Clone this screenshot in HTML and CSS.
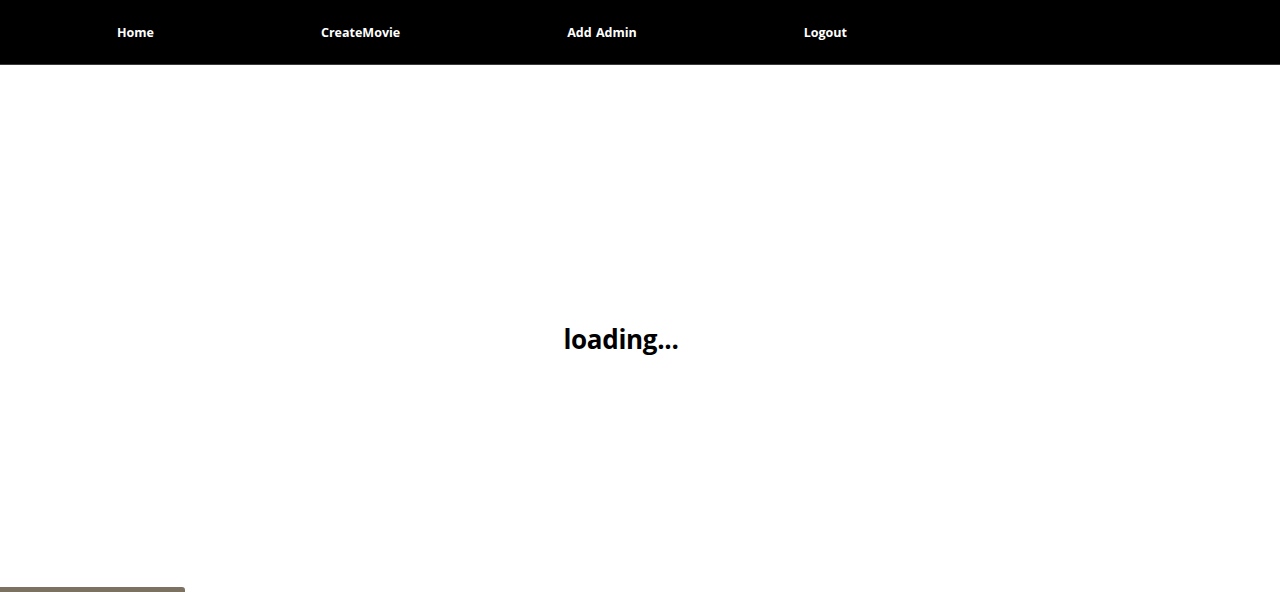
FILE: index.html
```html
<!DOCTYPE html>
<html lang="en">
<head>
<meta charset="utf-8">
<title>Admin</title>
<link rel="stylesheet" href="styles.css">
</head>
<body>
<nav class="navbar">
  <ul class="nav-list">
    <li class="nav-item"><a class="nav-link" href="#">Home</a></li>
    <li class="nav-item"><a class="nav-link" href="#">CreateMovie</a></li>
    <li class="nav-item"><a class="nav-link" href="#">Add Admin</a></li>
    <li class="nav-item"><a class="nav-link" href="#">Logout</a></li>
  </ul>
</nav>
<main class="content">
  <h2 class="loading">loading...</h2>
</main>
<div class="corner-bar"></div>
</body>
</html>
```

FILE: styles.css
```css
html, body {
  margin: 0;
  padding: 0;
  height: 100%;
  background: #ffffff;
  font-family: "Open Sans", "Noto Sans", sans-serif;
  overflow: hidden;
}

.navbar {
  background: #000000;
  height: 64px;
  border-bottom: 1px solid #3a3a3a;
  display: flex;
  align-items: center;
}

.nav-list {
  list-style: none;
  margin: 0 0 2px 0;
  padding: 0 0 0 117px;
  display: flex;
  gap: 167px;
}

.nav-link {
  color: #ffffff;
  text-decoration: none;
  font-weight: 700;
  font-size: 12.5px;
  letter-spacing: 0;
  word-spacing: 1px;
}

.content {
  height: calc(100% - 65px);
  display: flex;
  justify-content: center;
  padding-right: 38px;
  box-sizing: border-box;
}

.loading {
  margin: 256px 0 0 0;
  font-size: 26px;
  font-weight: 700;
  color: #000000;
  letter-spacing: -0.3px;
  line-height: 36px;
}

.corner-bar {
  position: fixed;
  left: 0;
  bottom: 0;
  width: 185px;
  height: 5px;
  background: #7b7262;
  border-top-right-radius: 3px;
}
```
